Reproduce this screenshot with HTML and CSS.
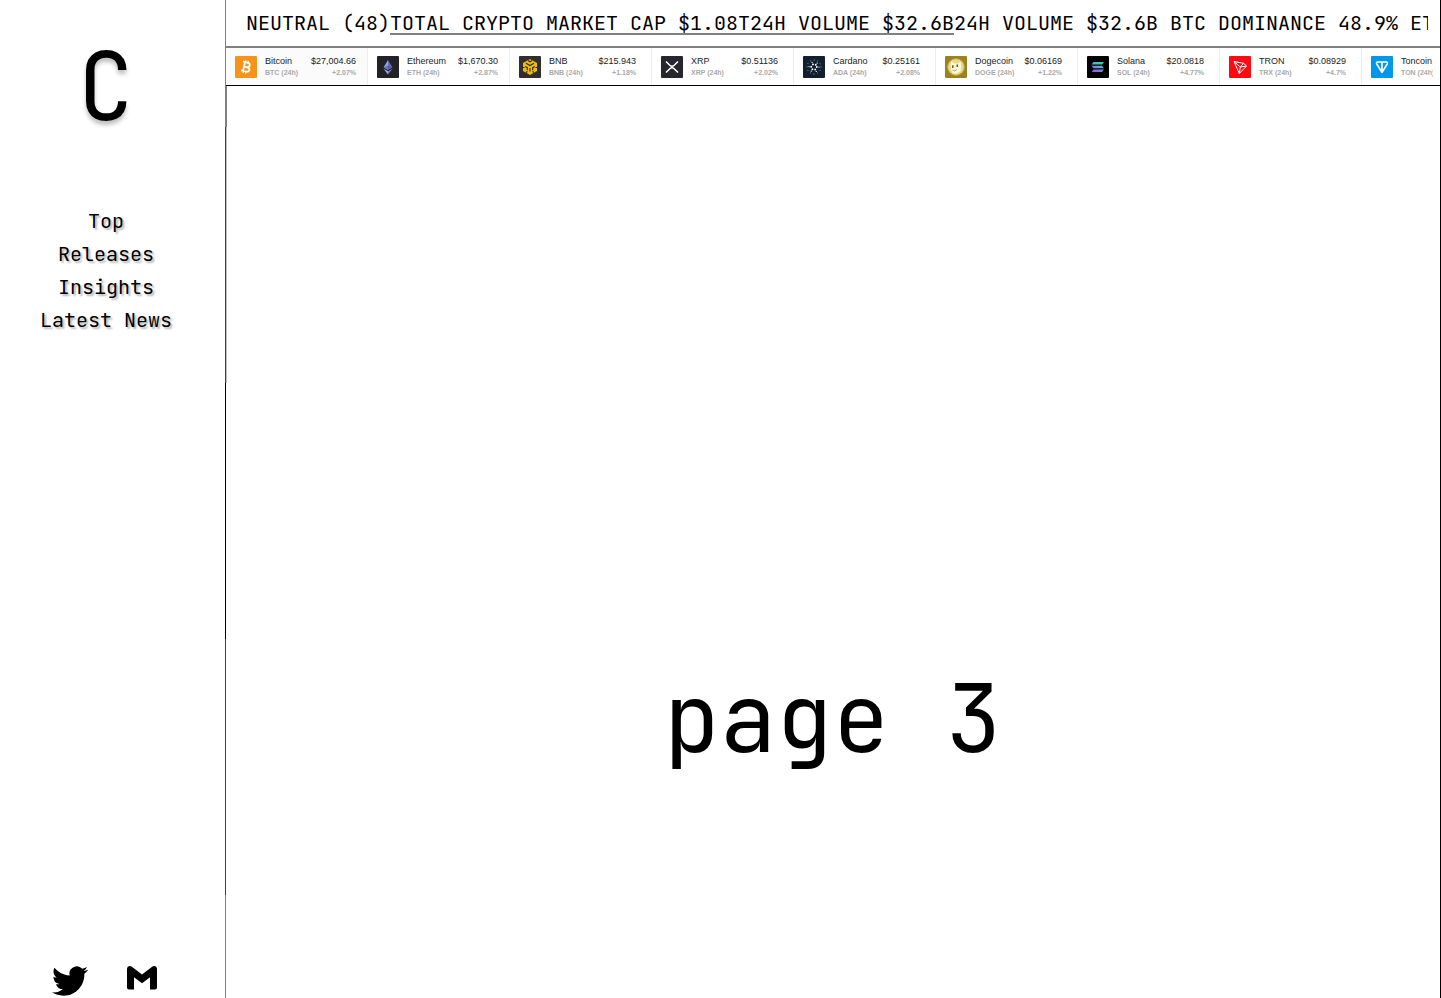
FILE: index.html
```
<!DOCTYPE html>
<html lang="en">
<head>
<meta charset="utf-8">
<title>Crypto news</title>
<link rel="stylesheet" href="styles.css">
</head>
<body>
<div class="layout">
  <aside class="sidebar">
    <div class="logo">C</div>
    <nav class="menu">
      <a href="#top">Top</a>
      <a href="#releases">Releases</a>
      <a href="#insights">Insights</a>
      <a href="#news">Latest News</a>
    </nav>
    <footer class="social">
      <a href="#twitter" aria-label="Twitter"><svg width="36" height="30" viewBox="0 2 24 20" preserveAspectRatio="none"><path d="M23.953 4.57a10 10 0 01-2.825.775 4.958 4.958 0 002.163-2.723c-.951.555-2.005.959-3.127 1.184a4.92 4.92 0 00-8.384 4.482C7.69 8.095 4.067 6.13 1.64 3.162a4.822 4.822 0 00-.666 2.475c0 1.71.87 3.213 2.188 4.096a4.904 4.904 0 01-2.228-.616v.06a4.923 4.923 0 003.946 4.827 4.996 4.996 0 01-2.212.085 4.936 4.936 0 004.604 3.417 9.867 9.867 0 01-6.102 2.105c-.39 0-.779-.023-1.17-.067a13.995 13.995 0 007.557 2.209c9.053 0 13.998-7.496 13.998-13.985 0-.21 0-.42-.015-.63A9.935 9.935 0 0024 4.59z"/></svg></a>
      <a href="#mail" aria-label="Gmail"><svg width="30" height="24" viewBox="0 0 30 24"><path d="M0 3C0 .4 2.800-.8 4.900.8L15 8.500 25.100.8C27.200-.8 30 .4 30 3V21.500Q30 23.500 28 23.500H23V11.300L15 17.300 7 11.300V23.500H2Q0 23.500 0 21.500Z"/></svg></a>
    </footer>
  </aside>
  <main class="main">
    <header class="headline">
      <div class="headline-text">NEUTRAL (48)<a href="#cap">TOTAL CRYPTO MARKET CAP $1.08T24H VOLUME $32.6B</a>24H VOLUME $32.6B BTC DOMINANCE 48.9% ET</div>
    </header>
    <section class="ticker">
      <div class="coins">
        <article class="coin wide shaded">
          <svg class="badge" viewBox="0 0 22 22"><rect width="22" height="22" rx="1" fill="#f7931a"/><g fill="none" stroke="#fff" stroke-width="1.800" transform="rotate(13 11 11)"><path d="M7 6.500H11.500Q14.300 6.500 14.300 8.700T11.500 10.900H9M11.500 10.900Q15 10.900 15 13.200T11.800 15.500H7M9 6.500V15.500"/><path d="M9.500 4.500V6.500M12 4.500V6.500M9.500 15.500V17.500M12 15.500V17.500" stroke-width="1.200"/></g></svg>
          <div class="info"><div class="row"><span>Bitcoin</span><span>$27,004.66</span></div><div class="row sub"><span>BTC (24h)</span><span>+2.07%</span></div></div>
        </article>
        <article class="coin wide">
          <svg class="badge" viewBox="0 0 22 22"><rect width="22" height="22" rx="1" fill="#222226"/><path d="M11 4 6.500 11.500 11 14Z" fill="#8fa0ee"/><path d="M11 4 15.500 11.500 11 14Z" fill="#626dc0"/><path d="M6.500 12.700 11 18.500V15.200Z" fill="#a0acf2"/><path d="M15.500 12.700 11 18.500V15.200Z" fill="#727bcb"/><path d="M6.500 11.500 11 9.500 15.500 11.500 11 14Z" fill="#4d559d" opacity=".6"/></svg>
          <div class="info"><div class="row"><span>Ethereum</span><span>$1,670.30</span></div><div class="row sub"><span>ETH (24h)</span><span>+2.87%</span></div></div>
        </article>
        <article class="coin">
          <svg class="badge" viewBox="0 0 22 22"><rect width="22" height="22" rx="1" fill="#302e30"/><path d="M11 3 18 7V15L11 19 4 15V7Z" fill="#f0b90b"/><path d="M7 7.200 11 9.500 15 7.200M11 12V15.500M6.300 10.500 8.300 11.700V14.200M15.700 10.500 13.700 11.700V14.200M9 4.500 11 5.700 13 4.500M4 11.500H5.500M16.500 11.500H18M7 16.500 8.500 15.500M15 16.500 13.500 15.500" fill="none" stroke="#302e30" stroke-width="1.200"/></svg>
          <div class="info"><div class="row"><span>BNB</span><span>$215.943</span></div><div class="row sub"><span>BNB (24h)</span><span>+1.18%</span></div></div>
        </article>
        <article class="coin">
          <svg class="badge" viewBox="0 0 22 22"><rect width="22" height="22" rx="1" fill="#27262f"/><path d="M5 5.500 8.800 9.300Q11 11.300 13.200 9.300L17 5.500M5 16.500 8.800 12.700Q11 10.700 13.200 12.700L17 16.500" fill="none" stroke="#fff" stroke-width="1.500"/></svg>
          <div class="info"><div class="row"><span>XRP</span><span>$0.51136</span></div><div class="row sub"><span>XRP (24h)</span><span>+2.02%</span></div></div>
        </article>
        <article class="coin">
          <svg class="badge" viewBox="0 0 22 22"><rect width="22" height="22" rx="1" fill="#112030"/><g fill="none" stroke="#fff" stroke-linecap="round"><circle cx="11" cy="11" r="2.800" stroke-width="1.800" stroke-dasharray=".1 2.832"/><circle cx="11" cy="11" r="5" stroke-width="1.200" stroke-dasharray=".1 5.136"/><circle cx="11" cy="11" r="7" stroke-width=".9" stroke-dasharray=".1 3.565" opacity=".7"/></g></svg>
          <div class="info"><div class="row"><span>Cardano</span><span>$0.25161</span></div><div class="row sub"><span>ADA (24h)</span><span>+2.08%</span></div></div>
        </article>
        <article class="coin">
          <svg class="badge" viewBox="0 0 22 22"><rect width="22" height="22" rx="1" fill="#9c821f"/><circle cx="11" cy="11" r="8.300" fill="#e8d890" stroke="#c9ad43"/><path d="M6 14Q5 9 6.500 5L9 7.500H13L15.500 6Q17 11 15.500 15L12 17.500H8Z" fill="#fff8dd"/><path d="M7 9.500 8.500 9V12H7ZM11.500 8.500H13V11H11.500Z" fill="#75601f"/><path d="M7.500 14Q10 16 12 13.500" fill="none" stroke="#c2a34b"/></svg>
          <div class="info"><div class="row"><span>Dogecoin</span><span>$0.06169</span></div><div class="row sub"><span>DOGE (24h)</span><span>+1.22%</span></div></div>
        </article>
        <article class="coin">
          <svg class="badge" viewBox="0 0 22 22"><defs><linearGradient id="sol" gradientUnits="userSpaceOnUse" x1="8" y1="17" x2="14" y2="5"><stop stop-color="#a24bea"/><stop offset=".5" stop-color="#6e9bd0"/><stop offset="1" stop-color="#25e5ac"/></linearGradient></defs><rect width="22" height="22" rx="1"/><path d="M6.500 6H17L15 8.500H4.500ZM4.500 9.800H15L17 12.300H6.500ZM6.500 13.600H17L15 16.100H4.500Z" fill="url(#sol)"/></svg>
          <div class="info"><div class="row"><span>Solana</span><span>$20.0818</span></div><div class="row sub"><span>SOL (24h)</span><span>+4.77%</span></div></div>
        </article>
        <article class="coin">
          <svg class="badge" viewBox="0 0 22 22"><rect width="22" height="22" rx="1" fill="#ff0a13"/><path d="M5 5.500 14.500 7.300 17.500 10 10.300 17.500ZM5 5.500 11.300 11 10.300 17.500M11.300 11 14.500 7.300M11.300 11 17.500 10" fill="none" stroke="#fff" stroke-linejoin="round"/></svg>
          <div class="info"><div class="row"><span>TRON</span><span>$0.08929</span></div><div class="row sub"><span>TRX (24h)</span><span>+4.7%</span></div></div>
        </article>
        <article class="coin">
          <svg class="badge" viewBox="0 0 22 22"><rect width="22" height="22" rx="1" fill="#0098ea"/><path d="M6.500 6H15.500Q17 6.500 16.200 8L11 16.500 5.800 8Q5 6.500 6.500 6ZM11 6V16" fill="none" stroke="#fff" stroke-width="1.600" stroke-linejoin="round"/></svg>
          <div class="info"><div class="row"><span>Toncoin</span></div><div class="row sub"><span>TON (24h)</span></div></div>
        </article>
      </div>
    </section>
    <h1 class="title">page 3</h1>
  </main>
</div>
</body>
</html>
```
FILE: styles.css
```
* { box-sizing: border-box; }
body {
  margin: 0;
  background: #fff;
  color: #000;
  font-family: "JetBrains Mono", "DejaVu Sans Mono", monospace;
  font-size: 20px;
}
a { color: inherit; text-decoration: none; }
.layout { display: flex; height: 100vh; overflow: hidden; }

.sidebar {
  flex: none;
  width: 226px;
  padding: 22px 14px 2px 0;
  display: flex;
  flex-direction: column;
  align-items: center;
  background: linear-gradient(#808080 127px, #404040 127px 383px, #000 383px 639px, #404040 639px 895px, #808080 895px) right / 1px 100% no-repeat;
}
.logo { font-size: 94px; line-height: 128px; text-shadow: 0 4px 4px rgba(0, 0, 0, .25); }
.menu {
  margin-top: 55px;
  display: flex;
  flex-direction: column;
  align-items: center;
  line-height: 33px;
  text-shadow: 2px 2px 2px rgba(0, 0, 0, .3);
}
.social { margin-top: auto; padding-right: 4px; display: flex; gap: 39px; }
.social svg { display: block; }

.main {
  flex: 1;
  min-width: 0;
  border-right: 1px solid #000;
  background: linear-gradient(#fff 46px, #808080 46px 127px, #c0c0c0 127px 383px, #fff 383px) left / 1px 100% no-repeat;
}
.headline { padding: 0 12px 0 20px; border-bottom: 2px solid #808080; }
.headline-text { overflow: hidden; white-space: nowrap; line-height: 46px; }
.headline a { text-decoration: underline 2px #808080; text-underline-offset: 3px; text-decoration-skip-ink: none; }

.ticker { padding-right: 7px; border-bottom: 1px solid #000; }
.coins { display: flex; overflow: hidden; font-family: "Liberation Sans", Arial, sans-serif; }
.coin {
  flex: none;
  width: 142px;
  height: 37px;
  padding: 1px 15px 0 9px;
  display: flex;
  align-items: center;
  gap: 8px;
  border-right: 1px solid #ededf2;
}
.wide { padding-right: 11px; }
.shaded { background: #fbfbfb; }
.badge { flex: none; width: 22px; height: 22px; }
.info { flex: 1; font-size: 9px; line-height: 12px; color: #222; }
.row { display: flex; justify-content: space-between; white-space: nowrap; }
.sub { font-size: 7px; font-weight: bold; color: #aaa; }

.title { margin: 568px 0 0; font-size: 94px; line-height: 128px; font-weight: normal; text-align: center; }
```
